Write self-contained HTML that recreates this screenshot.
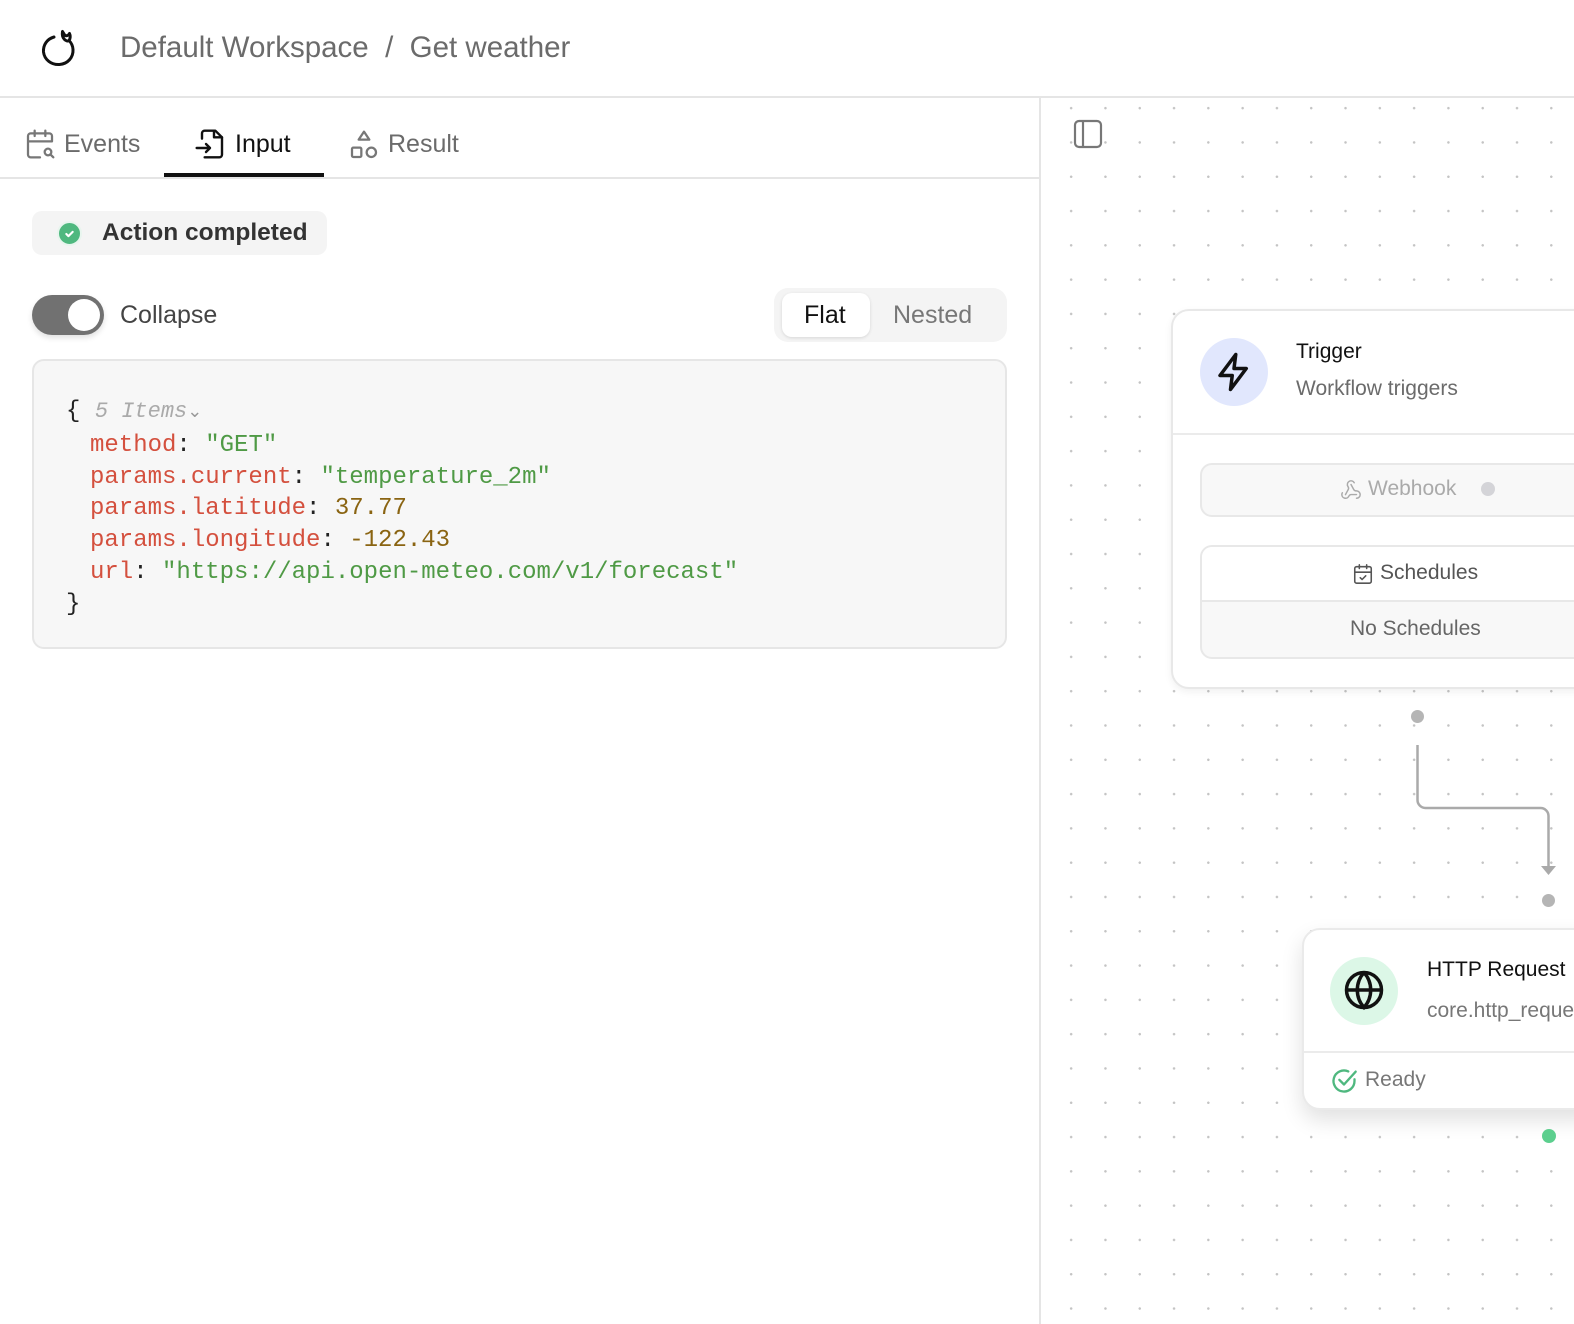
<!DOCTYPE html>
<html><head><meta charset="utf-8"><style>
*{box-sizing:border-box;margin:0;padding:0}
body{width:1574px;height:1324px;overflow:hidden;background:#fff;font-family:"Liberation Sans",sans-serif;position:relative}
.abs{position:absolute}
.canvas{position:absolute;left:1041px;top:97px;width:533px;height:1227px;background-image:radial-gradient(circle,#c4c4c4 1.1px,transparent 1.4px);background-size:34.3px 34.3px;background-position:13px -6px}
.mono{font-family:"Liberation Mono",monospace;font-size:24px;line-height:31.8px;white-space:pre}
.k{color:#d4503e}.s{color:#4f9a45}.n{color:#8a6412}
.ind{padding-left:24px}
</style></head><body>
<!-- header -->
<svg class="abs" style="left:38px;top:26px" width="44" height="44" viewBox="0 0 44 44" fill="none" stroke="#111" stroke-width="3" stroke-linecap="round" stroke-linejoin="round"><path d="M16 11C9 13 5 19 5.5 26c1 8 8 13 16 12.5 8-.5 14-7 13.5-15-.2-4-2-7-4-9"/><path d="M31 14.5c1.5-2 1.5-5 .5-7-1 2-3 2.5-4.5 2l-2.5-4c-.5 3 0 6 2 8 1.5 1.5 3.5 2 4.5 1z"/></svg>
<div class="abs" style="left:120px;top:31px;font-size:29.5px;color:#6b6b6b;white-space:pre">Default Workspace  /  Get weather</div>
<div class="abs" style="left:0;top:96px;width:1574px;height:2px;background:#e5e5e5"></div>
<div class="abs" style="left:1039px;top:97px;width:2px;height:1227px;background:#e5e5e5"></div>
<div class="canvas"></div>
<!-- tabs -->
<svg class="abs" style="left:24px;top:128px" width="32" height="32" viewBox="0 0 24 24" fill="none" stroke="#777" stroke-width="1.7" stroke-linecap="round" stroke-linejoin="round"><path d="M16 2v4M8 2v4M3 10h18M21 10V6a2 2 0 0 0-2-2H5a2 2 0 0 0-2 2v14a2 2 0 0 0 2 2h7"/><circle cx="18" cy="18" r="2.5"/><path d="M20 20l2 2"/></svg>
<div class="abs" style="left:64px;top:130px;font-size:25px;color:#6b6b6b">Events</div>
<svg class="abs" style="left:194px;top:127px" width="32" height="34" viewBox="0 0 24 24" fill="none" stroke="#111" stroke-width="1.8" stroke-linecap="round" stroke-linejoin="round"><path d="M6 8V4a2 2 0 0 1 2-2h8l5 5v13a2 2 0 0 1-2 2H8"/><path d="M15 2v5h6"/><path d="M2 15h10M9 12l3 3-3 3"/></svg>
<div class="abs" style="left:235px;top:130px;font-size:25px;color:#111">Input</div>
<div class="abs" style="left:164px;top:173px;width:160px;height:4px;background:#111"></div>
<svg class="abs" style="left:348px;top:129px" width="32" height="32" viewBox="0 0 24 24" fill="none" stroke="#777" stroke-width="1.7" stroke-linejoin="round"><path d="M12 2l4 6H8z"/><rect x="3" y="14" width="7" height="7" rx="1"/><circle cx="17.5" cy="17.5" r="3.5"/></svg>
<div class="abs" style="left:388px;top:130px;font-size:25px;color:#6b6b6b">Result</div>
<div class="abs" style="left:0;top:177px;width:1039px;height:2px;background:#e5e5e5"></div>
<!-- action completed -->
<div class="abs" style="left:32px;top:211px;width:295px;height:44px;background:#f4f4f4;border-radius:10px"></div>
<div class="abs" style="left:57px;top:221px;width:25px;height:25px;border-radius:50%;background:#4fb87f;border:2px solid #e8f5ee"></div>
<svg class="abs" style="left:61px;top:225px" width="17" height="17" viewBox="0 0 16 16" fill="none" stroke="#fff" stroke-width="2" stroke-linecap="round" stroke-linejoin="round"><path d="M5 8.5l2 2 4-4"/></svg>
<div class="abs" style="left:102px;top:219px;font-size:24.5px;font-weight:bold;color:#333">Action completed</div>
<!-- toggle -->
<div class="abs" style="left:32px;top:295px;width:72px;height:40px;border-radius:20px;background:#717171;box-shadow:0 3px 6px rgba(0,0,0,.12)"></div>
<div class="abs" style="left:68px;top:299px;width:32px;height:32px;border-radius:50%;background:#fff"></div>
<div class="abs" style="left:120px;top:301px;font-size:25px;color:#444">Collapse</div>
<!-- segmented -->
<div class="abs" style="left:774px;top:288px;width:233px;height:54px;border-radius:14px;background:#f4f4f4"></div>
<div class="abs" style="left:782px;top:293px;width:88px;height:44px;border-radius:10px;background:#fff;box-shadow:0 1px 3px rgba(0,0,0,.12)"></div>
<div class="abs" style="left:804px;top:301px;font-size:25px;color:#111">Flat</div>
<div class="abs" style="left:893px;top:301px;font-size:25px;color:#777">Nested</div>
<!-- code -->
<div class="abs" style="left:32px;top:359px;width:975px;height:290px;background:#f7f7f7;border:2px solid #e6e6e6;border-radius:12px"></div>
<div class="abs mono" style="left:66px;top:396px;color:#222"><div>{ <span style="color:#aaa;font-style:italic;font-size:22px">5 Items</span><span style="color:#999;font-size:18px">&#8964;</span></div><div class="ind"><span class="k">method</span>: <span class="s">"GET"</span></div><div class="ind"><span class="k">params.current</span>: <span class="s">"temperature_2m"</span></div><div class="ind"><span class="k">params.latitude</span>: <span class="n">37.77</span></div><div class="ind"><span class="k">params.longitude</span>: <span class="n">-122.43</span></div><div class="ind"><span class="k">url</span>: <span class="s">"https://api.open-meteo.com/v1/forecast"</span></div><div>}</div></div>
<!-- panel icon -->
<svg class="abs" style="left:1073px;top:119px" width="30" height="30" viewBox="0 0 30 30" fill="none" stroke="#777" stroke-width="2.2"><rect x="2" y="2" width="26" height="26" rx="4"/><path d="M10 2v26"/></svg>
<!-- trigger card -->
<div class="abs" style="left:1171px;top:309px;width:430px;height:380px;background:#fff;border:2px solid #e8e8e8;border-radius:18px;box-shadow:0 3px 8px rgba(0,0,0,.06)"></div>
<div class="abs" style="left:1200px;top:338px;width:68px;height:68px;border-radius:50%;background:#e1e7fd"></div>
<svg class="abs" style="left:1213px;top:351px" width="42" height="42" viewBox="0 0 24 24" fill="none" stroke="#111" stroke-width="2" stroke-linejoin="round"><path d="M13 2L4 14h7l-1 8 9-12h-7z"/></svg>
<div class="abs" style="left:1296px;top:340px;font-size:21px;color:#111">Trigger</div>
<div class="abs" style="left:1296px;top:377px;font-size:21px;color:#6b6b6b">Workflow triggers</div>
<div class="abs" style="left:1173px;top:433px;width:401px;height:2px;background:#ebebeb"></div>
<div class="abs" style="left:1200px;top:463px;width:400px;height:54px;border:2px solid #e8e8e8;border-radius:12px;background:#f8f8f8"></div>
<svg class="abs" style="left:1340px;top:479px" width="22" height="22" viewBox="0 0 24 24" fill="none" stroke="#aaa" stroke-width="1.6" stroke-linecap="round"><path d="M18 16.98h-5.99c-1.1 0-1.95.94-2.48 1.9A4 4 0 0 1 2 17c.01-.7.2-1.4.57-2"/><path d="M6 17l3.13-5.78c.53-.97.1-2.18-.5-3.1a4 4 0 1 1 6.89-4.06"/><path d="M12 6l3.13 5.73C15.66 12.7 16.9 13 18 13a4 4 0 0 1 0 8"/></svg>
<div class="abs" style="left:1368px;top:477px;font-size:21px;color:#aaa">Webhook</div>
<div class="abs" style="left:1481px;top:482px;width:14px;height:14px;border-radius:50%;background:#d4d4d8"></div>
<div class="abs" style="left:1200px;top:545px;width:400px;height:114px;border:2px solid #e8e8e8;border-radius:12px;background:#f8f8f8;overflow:hidden"><div style="height:55px;background:#fff;border-bottom:2px solid #e8e8e8"></div></div>
<svg class="abs" style="left:1352px;top:563px" width="22" height="22" viewBox="0 0 24 24" fill="none" stroke="#555" stroke-width="1.7" stroke-linecap="round" stroke-linejoin="round"><rect x="3" y="4" width="18" height="18" rx="2"/><path d="M16 2v4M8 2v4M3 10h18M9 16l2 2 4-4"/></svg>
<div class="abs" style="left:1380px;top:561px;font-size:21px;color:#555">Schedules</div>
<div class="abs" style="left:1350px;top:617px;font-size:21px;color:#666">No Schedules</div>
<!-- edge -->
<div class="abs" style="left:1411px;top:710px;width:13px;height:13px;border-radius:50%;background:#b5b5b5"></div>
<svg class="abs" style="left:1410px;top:720px" width="150" height="160" viewBox="0 0 150 160" fill="none" stroke="#aaa" stroke-width="2.5"><path d="M7.5 25v55a8 8 0 0 0 8 8h115a8 8 0 0 1 8 8v50"/><path d="M131 146h15l-7.5 9z" fill="#aaa" stroke="none"/></svg>
<div class="abs" style="left:1542px;top:894px;width:13px;height:13px;border-radius:50%;background:#b5b5b5"></div>
<!-- http card -->
<div class="abs" style="left:1302px;top:928px;width:300px;height:182px;background:#fff;border:2px solid #eaeaea;border-radius:18px;box-shadow:0 10px 22px rgba(0,0,0,.12)"></div>
<div class="abs" style="left:1330px;top:957px;width:68px;height:68px;border-radius:50%;background:#dcf7e7"></div>
<svg class="abs" style="left:1343px;top:969px" width="42" height="42" viewBox="0 0 24 24" fill="none" stroke="#111" stroke-width="2"><circle cx="12" cy="12" r="10"/><path d="M2 12h20M12 2a15 15 0 0 1 0 20a15 15 0 0 1 0-20"/></svg>
<div class="abs" style="left:1427px;top:958px;font-size:21px;color:#111">HTTP Request</div>
<div class="abs" style="left:1427px;top:999px;font-size:21px;color:#777;white-space:nowrap">core.http_request</div>
<div class="abs" style="left:1304px;top:1051px;width:270px;height:2px;background:#ebebeb"></div>
<svg class="abs" style="left:1330px;top:1067px" width="28" height="28" viewBox="0 0 24 24" fill="none" stroke="#4fb87f" stroke-width="2" stroke-linecap="round" stroke-linejoin="round"><path d="M21 10.5V12a9 9 0 1 1-5.3-8.2"/><path d="M8 11l4 4L22 4"/></svg>
<div class="abs" style="left:1365px;top:1068px;font-size:21px;color:#777">Ready</div>
<div class="abs" style="left:1542px;top:1129px;width:14px;height:14px;border-radius:50%;background:#5ccf8e"></div>
</body></html>
